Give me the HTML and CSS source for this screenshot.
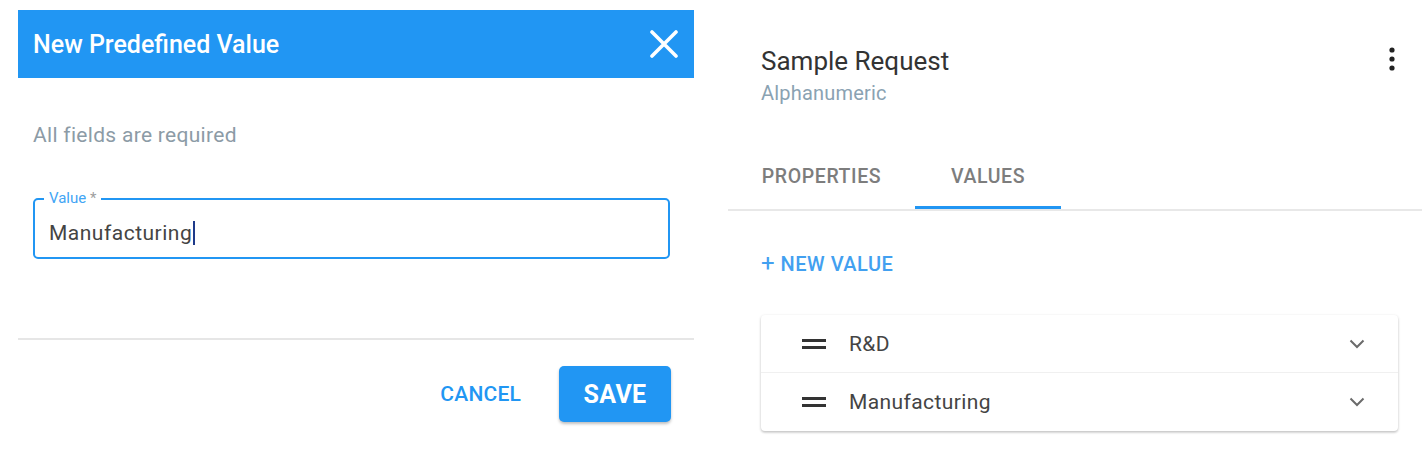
FILE: index.html
```html
<!DOCTYPE html>
<html>
<head>
<meta charset="utf-8">
<link rel="stylesheet" href="styles.css">
</head>
<body>
<div class="page">
  <section class="dialog">
    <header class="dialog-header">
      <h1 class="dialog-title">New Predefined Value</h1>
      <svg class="close-icon" width="28" height="28" viewBox="0 0 28 28"><path d="M2 2 L26 26 M26 2 L2 26" stroke="#fff" stroke-width="3.6" stroke-linecap="round" fill="none"/></svg>
    </header>
    <div class="dialog-body">
      <p class="hint">All fields are required</p>
      <div class="field">
        <span class="field-label">Value <span class="req">*</span></span>
        <div class="field-value">Manufacturing<span class="caret"></span></div>
      </div>
    </div>
    <div class="dialog-divider"></div>
    <div class="dialog-actions">
      <span class="btn-text">CANCEL</span>
      <span class="btn-save">SAVE</span>
    </div>
  </section>

  <section class="panel">
    <div class="panel-header">
      <div class="panel-titles">
        <div class="panel-title">Sample Request</div>
        <div class="panel-sub">Alphanumeric</div>
      </div>
      <svg class="kebab" width="6" height="24" viewBox="0 0 6 24"><circle cx="3" cy="3" r="2.6" fill="#222"/><circle cx="3" cy="12" r="2.6" fill="#222"/><circle cx="3" cy="21" r="2.6" fill="#222"/></svg>
    </div>
    <nav class="tabs">
      <div class="tab tab-props">PROPERTIES</div>
      <div class="tab tab-values active">VALUES</div>
    </nav>
    <div class="new-value"><span class="plus">+</span> NEW VALUE</div>
    <div class="card">
      <div class="row">
        <svg class="handle" width="24" height="12" viewBox="0 0 24 12"><rect x="0" y="1" width="24" height="3" fill="#333"/><rect x="0" y="8" width="24" height="3" fill="#333"/></svg>
        <span class="row-text">R&amp;D</span>
        <svg class="chev" width="16" height="10" viewBox="0 0 16 10"><path d="M1.5 1.5 L8 8 L14.5 1.5" stroke="#6b6b6b" stroke-width="2" fill="none"/></svg>
      </div>
      <div class="row">
        <svg class="handle" width="24" height="12" viewBox="0 0 24 12"><rect x="0" y="1" width="24" height="3" fill="#333"/><rect x="0" y="8" width="24" height="3" fill="#333"/></svg>
        <span class="row-text">Manufacturing</span>
        <svg class="chev" width="16" height="10" viewBox="0 0 16 10"><path d="M1.5 1.5 L8 8 L14.5 1.5" stroke="#6b6b6b" stroke-width="2" fill="none"/></svg>
      </div>
    </div>
  </section>
</div>
</body>
</html>
```

FILE: styles.css
```css
* { box-sizing: border-box; }
html, body { margin: 0; padding: 0; background: #fff; }
body { font-family: Roboto, "Liberation Sans", sans-serif; width: 1428px; height: 450px; overflow: hidden; }

.page { display: flex; padding-top: 10px; }

.dialog { margin-left: 18px; width: 676px; }
.dialog-header {
  height: 68px; background: #2196f3;
  display: flex; align-items: center; justify-content: space-between;
  padding: 0 16px 0 15px;
}
.dialog-title { margin: 0; color: #fff; font-size: 25px; font-weight: 500; letter-spacing: 0; }
.close-icon { display: block; }

.dialog-body { padding: 0 24px 0 15px; }
.hint { margin: 45px 0 0; font-size: 21px; line-height: 24px; color: #8c9ba6; letter-spacing: 0.3px; }
.field {
  position: relative; margin-top: 51px; height: 61px;
  border: 2px solid #2196f3; border-radius: 5px;
  display: flex; align-items: center; padding: 8px 14px 0;
}
.field-label {
  position: absolute; left: 9px; top: -10px;
  background: #fff; padding: 0 5px;
  font-size: 15px; line-height: 17px; color: #42a5f5;
}
.req { color: #9e9e9e; }
.field-value { font-size: 21px; color: #444; letter-spacing: 0.5px; display: flex; align-items: center; }
.caret { display: inline-block; width: 1.5px; height: 24px; background: #1e3a8a; margin-left: 1px; }

.dialog-divider { margin-top: 79px; height: 2px; background: #e6e6e6; }
.dialog-actions { display: flex; justify-content: flex-end; align-items: center; padding: 26px 23px 0 0; }
.btn-text { font-size: 21px; font-weight: 500; color: #2196f3; margin-right: 38px; letter-spacing: 0.2px; }
.btn-save {
  width: 112px; height: 56px; border-radius: 5px; background: #2196f3; color: #fff;
  display: flex; align-items: center; justify-content: center;
  font-size: 25px; font-weight: 700; letter-spacing: 0.3px;
  box-shadow: 0 2px 3px rgba(0,0,0,0.25);
}

.panel { margin-left: 34px; width: 694px; }
.panel-header { display: flex; justify-content: space-between; align-items: flex-start; padding: 36px 27px 0 33px; }
.panel-title { font-size: 26px; line-height: 30px; color: #333; }
.panel-sub { font-size: 20px; line-height: 24px; margin-top: 5px; color: #8aa2b2; letter-spacing: 0.2px; }
.kebab { display: block; margin-top: 1px; }

.tabs { display: flex; margin-top: 38px; border-bottom: 2px solid #e8e8e8; }
.tab { height: 66px; display: flex; align-items: center; justify-content: center; font-size: 19.5px; font-weight: 500; color: #7d7d7d; letter-spacing: 0.6px; }
.tab-props { width: 187px; }
.tab-values { width: 146px; }
.tab.active { box-shadow: inset 0 -3px 0 #2196f3; }

.new-value { margin: 38px 0 0 33px; font-size: 20px; font-weight: 500; color: #42a0f0; letter-spacing: 0.5px; }
.plus { font-size: 24px; font-weight: 400; }

.card {
  margin: 38px 0 0 33px; width: 637px; border-radius: 4px; background: #fff;
  box-shadow: 0 1px 3px rgba(0,0,0,0.2), 0 2px 2px rgba(0,0,0,0.08);
}
.row { display: flex; align-items: center; height: 57px; padding: 0 33px 0 41px; }
.row + .row { border-top: 1px solid #f0f0f0; height: 59px; }
.handle { display: block; }
.row-text { flex: 1; margin-left: 23px; font-size: 21px; color: #444; letter-spacing: 0.4px; }
.chev { display: block; }
```
